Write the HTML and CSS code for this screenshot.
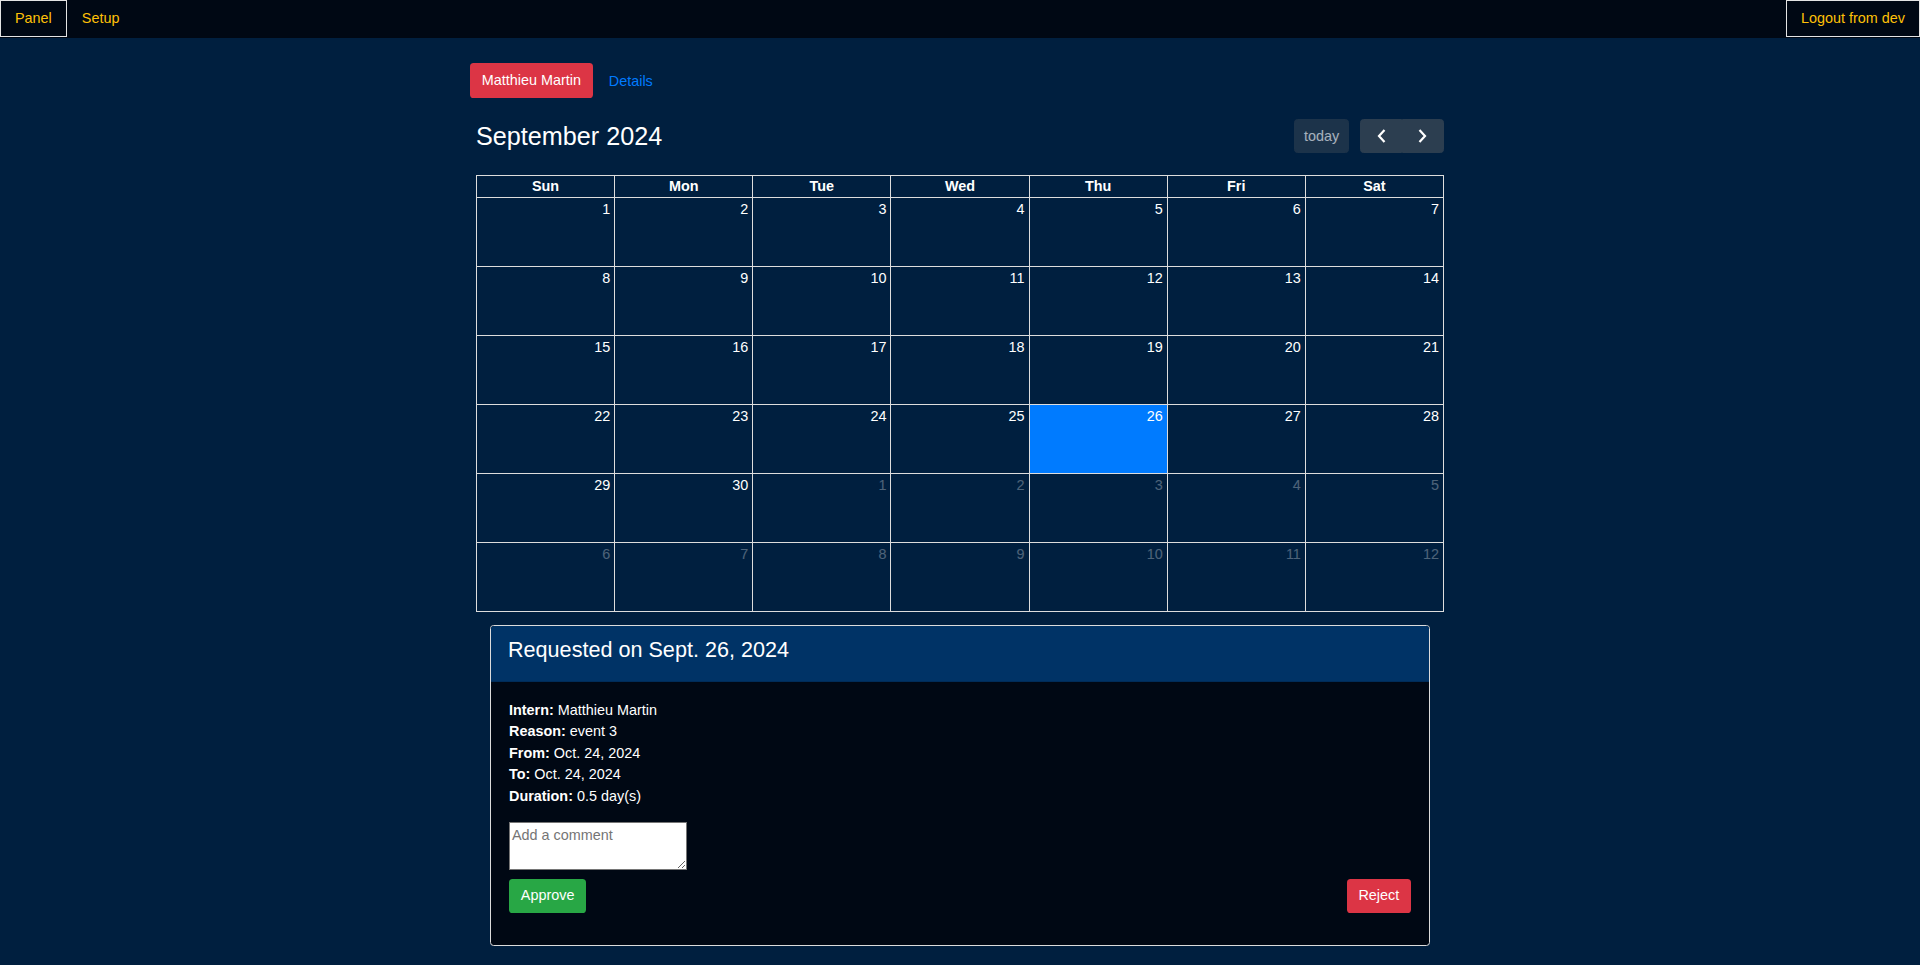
FILE: index.html
```html
<!DOCTYPE html>
<html lang="en">
<head>
<meta charset="utf-8">
<title>Leave requests</title>
<link rel="stylesheet" href="styles.css">
</head>
<body>
<nav class="topbar">
  <div class="nav-group">
    <a class="nav-link active" href="#">Panel</a>
    <a class="nav-link" href="#">Setup</a>
  </div>
  <div class="nav-group">
    <a class="nav-link active" href="#">Logout from dev</a>
  </div>
</nav>

<main class="wrap">
  <div class="tabs">
    <a class="pill pill-danger" href="#">Matthieu Martin</a>
    <a class="pill-link" href="#">Details</a>
  </div>

  <section class="calendar">
    <div class="toolbar">
      <h2 class="cal-title">September 2024</h2>
      <div class="toolbar-right">
        <button class="fc-btn disabled" type="button">today</button>
        <div class="btn-group">
          <button class="fc-btn icon-btn" type="button" aria-label="prev">
            <svg width="22" height="22" viewBox="0 0 22 22"><path d="M14.5 5 L9 11 L14.5 17" fill="none" stroke="#fff" stroke-width="2.2"/></svg>
          </button>
          <button class="fc-btn icon-btn" type="button" aria-label="next">
            <svg width="22" height="22" viewBox="0 0 22 22"><path d="M7.5 5 L13 11 L7.5 17" fill="none" stroke="#fff" stroke-width="2.2"/></svg>
          </button>
        </div>
      </div>
    </div>

    <table class="grid">
      <thead>
        <tr><th>Sun</th><th>Mon</th><th>Tue</th><th>Wed</th><th>Thu</th><th>Fri</th><th>Sat</th></tr>
      </thead>
      <tbody>
        <tr><td><span class="num">1</span></td><td><span class="num">2</span></td><td><span class="num">3</span></td><td><span class="num">4</span></td><td><span class="num">5</span></td><td><span class="num">6</span></td><td><span class="num">7</span></td></tr>
        <tr><td><span class="num">8</span></td><td><span class="num">9</span></td><td><span class="num">10</span></td><td><span class="num">11</span></td><td><span class="num">12</span></td><td><span class="num">13</span></td><td><span class="num">14</span></td></tr>
        <tr><td><span class="num">15</span></td><td><span class="num">16</span></td><td><span class="num">17</span></td><td><span class="num">18</span></td><td><span class="num">19</span></td><td><span class="num">20</span></td><td><span class="num">21</span></td></tr>
        <tr><td><span class="num">22</span></td><td><span class="num">23</span></td><td><span class="num">24</span></td><td><span class="num">25</span></td><td class="today"><span class="num">26</span></td><td><span class="num">27</span></td><td><span class="num">28</span></td></tr>
        <tr><td><span class="num">29</span></td><td><span class="num">30</span></td><td class="other"><span class="num">1</span></td><td class="other"><span class="num">2</span></td><td class="other"><span class="num">3</span></td><td class="other"><span class="num">4</span></td><td class="other"><span class="num">5</span></td></tr>
        <tr><td class="other"><span class="num">6</span></td><td class="other"><span class="num">7</span></td><td class="other"><span class="num">8</span></td><td class="other"><span class="num">9</span></td><td class="other"><span class="num">10</span></td><td class="other"><span class="num">11</span></td><td class="other"><span class="num">12</span></td></tr>
      </tbody>
    </table>
  </section>

  <section class="card">
    <div class="card-header">
      <h4 class="card-title">Requested on Sept. 26, 2024</h4>
    </div>
    <div class="card-body">
      <p class="details">
        <b>Intern:</b> Matthieu Martin<br>
        <b>Reason:</b> event 3<br>
        <b>From:</b> Oct. 24, 2024<br>
        <b>To:</b> Oct. 24, 2024<br>
        <b>Duration:</b> 0.5 day(s)
      </p>
      <form class="review">
        <textarea class="comment" placeholder="Add a comment"></textarea>
        <div class="actions">
          <button class="btn btn-success" type="button">Approve</button>
          <button class="btn btn-danger" type="button">Reject</button>
        </div>
      </form>
    </div>
  </section>
</main>
</body>
</html>
```

FILE: styles.css
```css
html {
  font-size: 14.4px;
}
body {
  margin: 0;
  background: #001f3f;
  color: #fff;
  font-family: "Liberation Sans", Arial, Helvetica, sans-serif;
  font-size: 1rem;
  line-height: 1.5;
}
a { text-decoration: none; }

.topbar {
  display: flex;
  justify-content: space-between;
  align-items: stretch;
  background: #000814;
  height: 38px;
}
.nav-group {
  display: flex;
}
.nav-link {
  display: block;
  color: #ffc107;
  padding: 6.5px 14px;
  border: 1px solid transparent;
  height: 37px;
  box-sizing: border-box;
  line-height: 21.6px;
}
.nav-link.active {
  border-color: #e4e4e4;
}

.wrap {
  width: 980px;
  margin: 0 auto;
  padding-top: 25px;
}

.tabs {
  display: flex;
  align-items: center;
  height: 35px;
}
.pill {
  display: block;
  padding: 5.4px 10.8px;
  border: 1px solid transparent;
  border-radius: 3.6px;
  line-height: 21.6px;
}
.pill-danger {
  background: #dc3545;
  color: #fff;
}
.pill-link {
  color: #007bff;
  margin-left: 16px;
  padding-top: 2px;
}

.calendar {
  margin: 21px 6px 0;
}
.toolbar {
  display: flex;
  justify-content: space-between;
  align-items: center;
  margin-bottom: 22px;
}
.cal-title {
  margin: 0;
  font-size: 25.2px;
  font-weight: 400;
  line-height: 1.2;
}
.toolbar-right {
  display: flex;
  align-items: center;
  gap: 11px;
}
.fc-btn {
  display: flex;
  align-items: center;
  justify-content: center;
  height: 34px;
  box-sizing: border-box;
  padding: 0 9.36px;
  background: #2c3e50;
  border: 1px solid #2c3e50;
  border-radius: 3.6px;
  color: #fff;
  font-family: inherit;
  font-size: 14.4px;
  line-height: 21.6px;
}
.fc-btn.disabled {
  opacity: 0.65;
  width: 55px;
  padding-top: 1px;
}
.btn-group {
  display: flex;
}
.icon-btn {
  width: 42px;
  padding: 0;
}
.btn-group .icon-btn:first-child {
  border-top-right-radius: 0;
  border-bottom-right-radius: 0;
}
.btn-group .icon-btn:last-child {
  border-top-left-radius: 0;
  border-bottom-left-radius: 0;
}

.grid {
  width: 100%;
  border-collapse: collapse;
  table-layout: fixed;
  border: 1px solid #ddd;
}
.grid th {
  border: 1px solid #ddd;
  height: 21px;
  padding: 0;
  font-weight: 700;
  line-height: 21px;
  text-align: center;
}
.grid td {
  border: 1px solid #ddd;
  height: 68px;
  padding: 0;
  vertical-align: top;
  text-align: right;
}
.grid td.today {
  background: #007bff;
}
.num {
  display: block;
  padding: 3px 4px 0;
  line-height: 1.15;
}
.grid td.other .num {
  opacity: 0.3;
}

.card {
  margin: 13px 20px 0;
  border: 1px solid #dcdcdc;
  border-radius: 3.6px;
  background: #000814;
  overflow: hidden;
}
.card-header {
  background: #003366;
  padding: 10.8px 17px;
  border-bottom: 1px solid rgba(0, 0, 0, 0.125);
}
.card-title {
  margin: 0 0 7.2px;
  font-size: 21.6px;
  font-weight: 400;
  line-height: 1.2;
}
.card-body {
  padding: 18px 18px 18px;
}
.details {
  margin: 0 0 14.4px;
  line-height: 21.6px;
}
.review {
  margin-bottom: 14.4px;
}
.comment {
  display: block;
  width: 178px;
  height: 48px;
  box-sizing: border-box;
  margin: 0 0 9px;
  padding: 2px;
  border: 1px solid #767676;
  background: #fff;
  font-family: "Liberation Sans", Arial, sans-serif;
  font-size: 14.4px;
  line-height: 21.6px;
}
.comment::placeholder {
  color: #757575;
}
.actions {
  display: flex;
  justify-content: space-between;
}
.btn {
  height: 34px;
  box-sizing: border-box;
  padding: 0 10.8px;
  border: 1px solid transparent;
  border-radius: 3.6px;
  color: #fff;
  font-family: inherit;
  font-size: 14.4px;
  line-height: 21.6px;
}
.btn-success {
  background: #28a745;
}
.btn-danger {
  background: #dc3545;
}
```
